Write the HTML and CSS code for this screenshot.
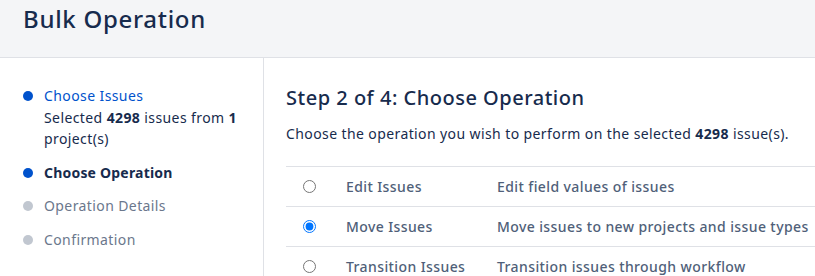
FILE: index.html
```html
<!DOCTYPE html>
<html lang="en">
<head>
    <meta charset="UTF-8">
    <title>Bulk Operation</title>
    <link rel="stylesheet" href="styles.css">
</head>
<body>
    <header class="page-header">
        <h1>Bulk Operation</h1>
    </header>

    <div class="layout">
        <aside class="steps">
            <ol class="step-list">
                <li class="step done">
                    <a href="#">Choose Issues</a>
                    <p>Selected <b>4298</b> issues from <b>1</b> project(s)</p>
                </li>
                <li class="step current">Choose Operation</li>
                <li class="step todo">Operation Details</li>
                <li class="step todo">Confirmation</li>
            </ol>
        </aside>

        <main class="content">
            <h2>Step 2 of 4: Choose Operation</h2>
            <p class="intro">Choose the operation you wish to perform on the selected <b>4298</b> issue(s).</p>

            <table class="ops">
                <tr>
                    <td class="radio-cell"><input type="radio" name="op" id="op-edit"></td>
                    <td class="name"><label for="op-edit">Edit Issues</label></td>
                    <td class="desc">Edit field values of issues</td>
                </tr>
                <tr>
                    <td class="radio-cell"><input type="radio" name="op" id="op-move" checked></td>
                    <td class="name"><label for="op-move">Move Issues</label></td>
                    <td class="desc">Move issues to new projects and issue types</td>
                </tr>
                <tr>
                    <td class="radio-cell"><input type="radio" name="op" id="op-transition"></td>
                    <td class="name"><label for="op-transition">Transition Issues</label></td>
                    <td class="desc">Transition issues through workflow</td>
                </tr>
            </table>
        </main>
    </div>
</body>
</html>
```

FILE: styles.css
```css
* {
    margin: 0;
    padding: 0;
    box-sizing: border-box;
}

body {
    font-family: 'Noto Sans', 'Open Sans', Arial, sans-serif;
    font-size: 14px;
    letter-spacing: 0.4px;
    color: #172b4d;
    background: #fff;
    overflow: hidden;
}

.page-header {
    background: #f4f5f7;
    border-bottom: 1px solid #dfe1e6;
    height: 58px;
    padding: 3px 23px 0;
}

.page-header h1 {
    font-size: 24px;
    font-weight: 500;
    line-height: 32px;
    letter-spacing: 0.7px;
}

.layout {
    display: flex;
    min-height: 240px;
}

.steps {
    width: 264px;
    flex-shrink: 0;
    border-right: 1px solid #dfe1e6;
    padding: 27px 16px 0 24px;
}

.step-list {
    list-style: none;
}

.step {
    position: relative;
    padding-left: 20px;
    line-height: 21.5px;
    margin-bottom: 12px;
}

.step::before {
    content: '';
    position: absolute;
    left: -1px;
    top: 6px;
    width: 10px;
    height: 10px;
    border-radius: 50%;
    background: #c1c7d0;
}

.step.done::before,
.step.current::before {
    background: #0052cc;
}

.step a {
    color: #0052cc;
    text-decoration: none;
}

.step.current {
    font-weight: 700;
    letter-spacing: 0.2px;
}

.step.todo {
    color: #6b778c;
}

.content {
    flex: 1;
    padding: 26px 0 0 22px;
}

.content h2 {
    font-size: 20px;
    font-weight: 500;
    line-height: 28px;
    letter-spacing: 0.5px;
    margin-bottom: 12px;
}

.intro {
    line-height: 20px;
    margin-bottom: 22px;
}

.ops {
    width: 100%;
    border-collapse: collapse;
    border-top: 1px solid #dfe1e6;
    color: #505f79;
    font-weight: 500;
}

.ops td {
    height: 40px;
    border-bottom: 1px solid #dfe1e6;
    white-space: nowrap;
    vertical-align: middle;
}

.ops .radio-cell {
    width: 60px;
    padding-left: 17px;
}

.ops .radio-cell input {
    width: 13px;
    height: 13px;
    display: block;
}

.ops .name {
    width: 151px;
}
```
